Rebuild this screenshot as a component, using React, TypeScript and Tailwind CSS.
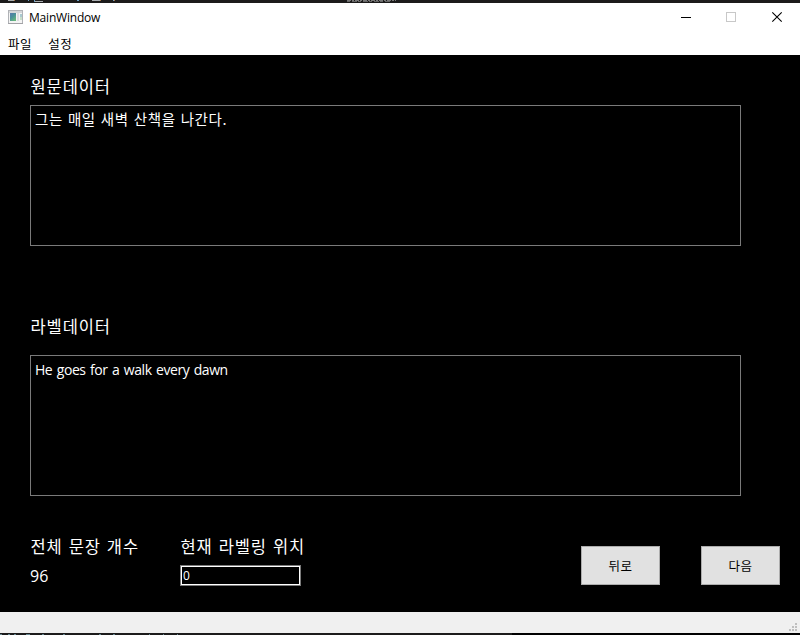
import React from "react";

const korean = "font-['Noto_Sans_CJK_KR',sans-serif]";
const latin = "font-['Open_Sans','Noto_Sans_CJK_KR',sans-serif]";

function AppIcon() {
  return (
    <svg className="block h-[15px] w-[16px]" viewBox="0 0 16 15" shapeRendering="crispEdges">
      <defs>
        <linearGradient id="pane" x1="0" y1="0" x2="0.7" y2="1">
          <stop offset="0" stopColor="#5878ae" />
          <stop offset="0.5" stopColor="#4a9099" />
          <stop offset="1" stopColor="#68b87c" />
        </linearGradient>
      </defs>
      <rect x="0.5" y="0.5" width="14" height="13" fill="#f4f4f4" stroke="#b0b2b6" />
      <rect x="1" y="1" width="13" height="2" fill="#d4d6d8" />
      <rect x="2" y="3" width="6" height="8" fill="url(#pane)" />
      <rect x="9" y="3" width="2" height="8" fill="#dcdcdf" />
      <rect x="12" y="4" width="2" height="3" fill="#a9c8cf" />
      <rect x="12" y="7" width="2" height="3" fill="#c7dec9" />
      <rect x="0" y="13" width="15" height="1" fill="#a2a2a6" />
    </svg>
  );
}

function TitleBar() {
  return (
    <header className="flex h-[29px] items-center bg-white pl-2">
      <AppIcon />
      <span className={`${latin} ml-[5px] whitespace-nowrap text-[12px] leading-[16px] tracking-[-0.2px] text-black`}>
        MainWindow
      </span>
      <div className="ml-auto flex h-full items-center pr-[17px]">
        <svg className="mb-px h-[12px] w-[102px]" viewBox="0 0 102 12" fill="none">
          <path d="M0 6.5H10" stroke="#000" />
          <rect x="45.5" y="1.5" width="9" height="9" stroke="#c8c8c8" />
          <path d="M91.3 1.3L100.7 10.7M100.7 1.3L91.3 10.7" stroke="#000" strokeWidth="1.1" />
        </svg>
      </div>
    </header>
  );
}

function MenuBar() {
  return (
    <nav className={`${korean} flex h-[23px] items-center gap-4 bg-white pl-2 text-[12.5px] leading-[18px] tracking-[0.6px] text-black`}>
      <span>파일</span>
      <span>설정</span>
    </nav>
  );
}

function PushButton({ children }: { children: React.ReactNode }) {
  return (
    <button className={`${korean} h-[39px] w-[79px] border border-[#adadad] bg-[#e1e1e1] text-[12.5px] leading-[18px] tracking-[0.6px] text-black`}>
      {children}
    </button>
  );
}

function Label({ children }: { children: React.ReactNode }) {
  return (
    <div className={`${korean} h-[22px] whitespace-nowrap pl-[0.5px] text-[16.5px] leading-[22px] tracking-[0.9px] [word-spacing:1.4px]`}>{children}</div>
  );
}

function SizeGrip() {
  return (
    <svg className="h-[8px] w-[8px]" viewBox="0 0 8 8" fill="#bfbfbf" shapeRendering="crispEdges">
      <path d="M6 0h2v2h-2zM3 3h2v2h-2zM6 3h2v2h-2zM0 6h2v2h-2zM3 6h2v2h-2zM6 6h2v2h-2z" />
    </svg>
  );
}

/* Slivers of the window behind, showing above and below this one. */
function BackdropTop() {
  return (
    <svg className="block h-[3px] w-[800px] shrink-0 bg-[#1c1b1b]" viewBox="0 0 800 3" shapeRendering="crispEdges">
      <path d="M8 0h6v1h-6zM35 1h8v1h-8zM92 0h8v1h-8z" fill="#a9adb0" />
      <path d="M28 0h1v1h-1zM34 0h1v2h-1zM77 0h2v1h-2zM113 0h1v1h-1z" fill="#6b9fc4" />
      <path d="M14 0h1v1h-1zM100 0h1v1h-1zM114 0h1v1h-1z" fill="#a87646" />
      <path d="M347 0.5H396" stroke="#777" strokeDasharray="4 1 2 1" />
      <path d="M347 1.5H391" stroke="#666" strokeDasharray="3 2 5 1" />
    </svg>
  );
}

function BackdropBottom() {
  return (
    <svg className="block h-[2px] w-[800px] shrink-0" viewBox="0 0 800 2" shapeRendering="crispEdges">
      <path d="M0 0h512v2h-512z" fill="#1c1b1b" />
      <path
        d="M0 1h2v1h-2zM8 1h2v1h-2zM14 1h2v1h-2zM26 1h4v1h-4zM42 1h2v1h-2zM63 1h2v1h-2zM99 1h2v1h-2zM113 1h2v1h-2zM149 1h1v1h-1zM163 1h1v1h-1zM177 1h1v1h-1z"
        fill="#64848e"
      />
    </svg>
  );
}

export default function App() {
  return (
    <div className="flex h-[635px] w-[800px] flex-col overflow-hidden bg-black">
      <BackdropTop />
      <TitleBar />
      <MenuBar />
      <main className="flex h-[557px] flex-col pl-[30px] pt-[20px] text-white">
        <Label>원문데이터</Label>
        <div className={`${korean} mt-[8px] h-[141px] w-[711px] border border-[#7a7a7a] px-1 pt-[3px] text-[14.5px] leading-[20px] tracking-[0.6px] [word-spacing:1.2px]`}>
          그는 매일 새벽 산책을 나간다.
        </div>
        <div className="mt-[69px]">
          <Label>라벨데이터</Label>
        </div>
        <div className={`${latin} mt-[18px] h-[141px] w-[711px] border border-[#7a7a7a] px-1 pt-[4px] text-[14px] leading-[20px] tracking-[-0.45px] [word-spacing:1.3px]`}>
          He goes for a walk every dawn
        </div>
        <div className="mt-[39px] flex">
          <div className="w-[150px]">
            <Label>전체 문장 개수</Label>
            <div className={`${latin} mt-[8px] text-[16px] leading-[22px]`}>96</div>
          </div>
          <div className="w-[401px]">
            <Label>현재 라벨링 위치</Label>
            <div className="mt-[8px] h-[21px] w-[121px] border border-[#7a7a7a]">
              <div className={`${latin} h-[19px] border border-white pl-[1px] text-[12px] leading-[18px]`}>0</div>
            </div>
          </div>
          <div className="flex gap-[41px] pt-[11px]">
            <PushButton>뒤로</PushButton>
            <PushButton>다음</PushButton>
          </div>
        </div>
      </main>
      <footer className="flex h-[21px] items-end justify-end bg-[#f0f0f0] pb-[2px] pr-[3px]">
        <SizeGrip />
      </footer>
      <BackdropBottom />
    </div>
  );
}
